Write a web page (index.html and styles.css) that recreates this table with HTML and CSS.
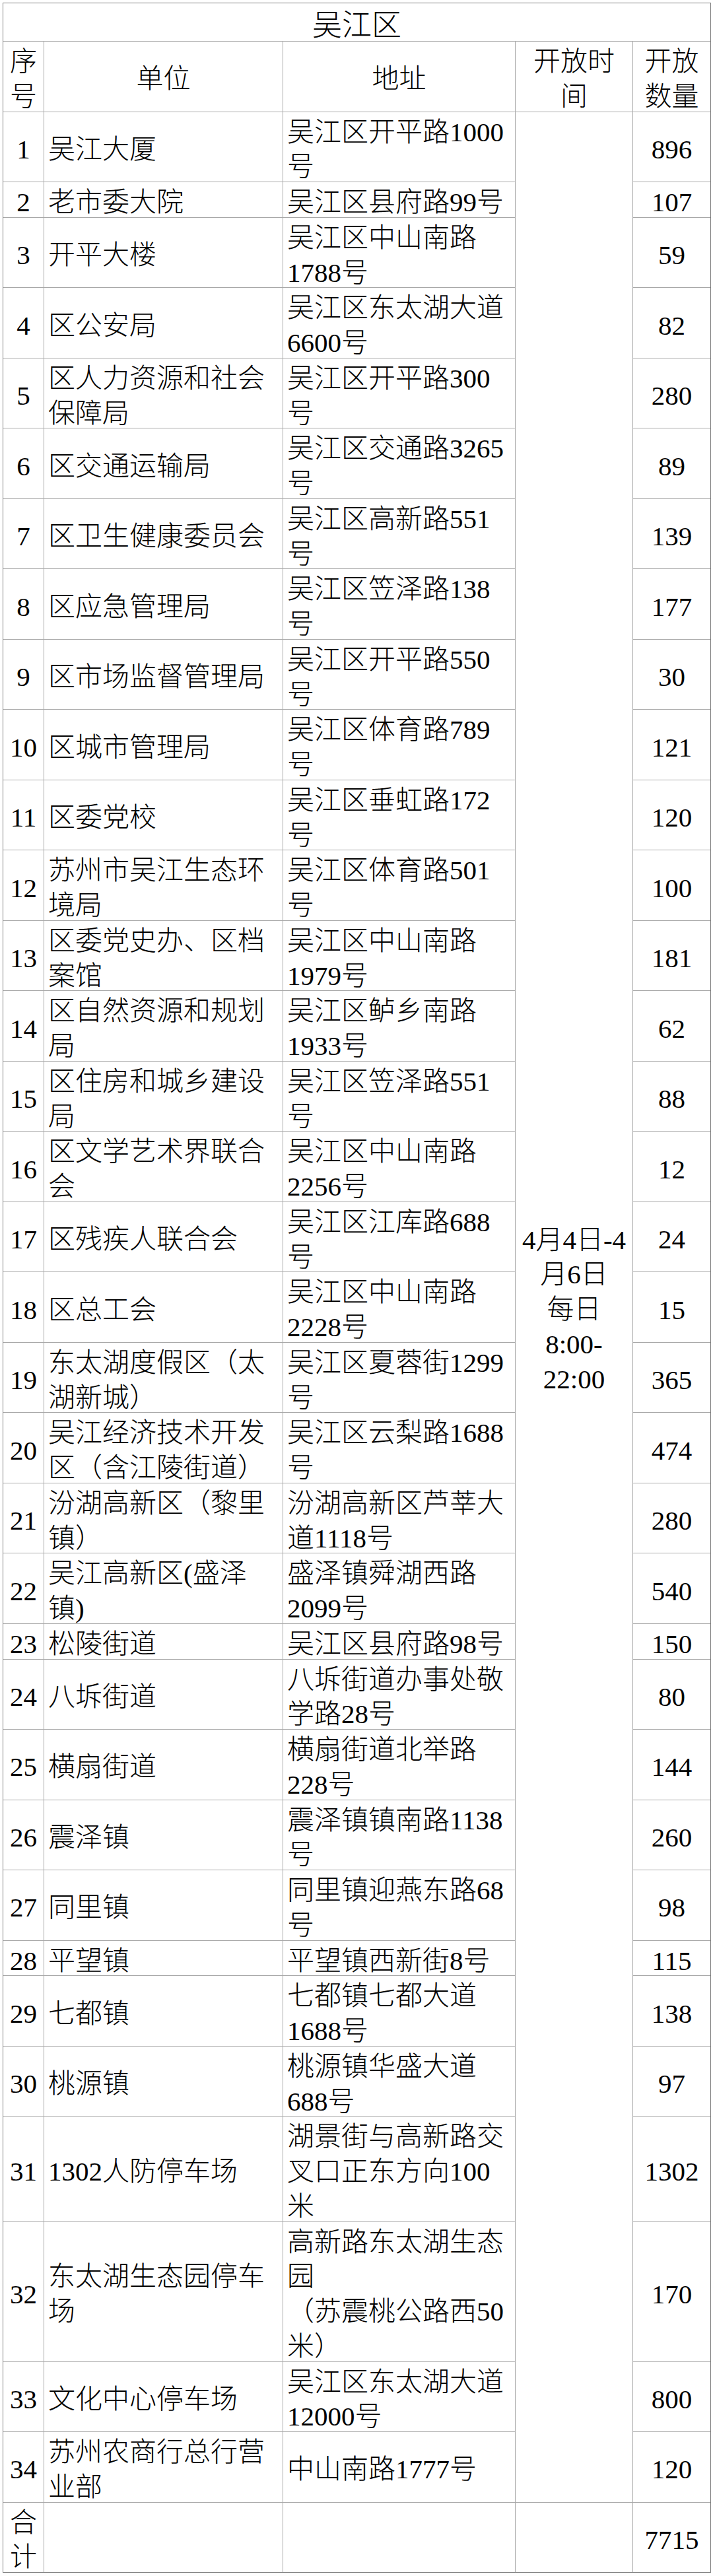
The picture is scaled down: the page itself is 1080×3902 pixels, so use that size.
FILE: index.html
```html
<!DOCTYPE html>
<html lang="zh-CN">
<head>
<meta charset="utf-8">
<title>吴江区</title>
<link rel="stylesheet" href="styles.css">
</head>
<body>
<table class="sheet">
<colgroup>
<col class="w-no"><col class="w-name"><col class="w-addr"><col class="w-time"><col class="w-qty">
</colgroup>
<thead>
<tr class="title"><td colspan="5" class="ctr">吴江区</td></tr>
<tr class="head">
<td class="ctr">序<br>号</td>
<td class="ctr">单位</td>
<td class="ctr">地址</td>
<td class="ctr">开放时<br>间</td>
<td class="ctr">开放<br>数量</td>
</tr>
</thead>
<tbody>
<tr><td class="ctr">1</td><td>吴江大厦</td><td>吴江区开平路1000<br>号</td><td class="ctr time" rowspan="34">4月4日-4<br>月6日<br>每日<br>8:00-<br>22:00</td><td class="ctr">896</td></tr>
<tr><td class="ctr">2</td><td>老市委大院</td><td>吴江区县府路99号</td><td class="ctr">107</td></tr>
<tr><td class="ctr">3</td><td>开平大楼</td><td>吴江区中山南路<br>1788号</td><td class="ctr">59</td></tr>
<tr><td class="ctr">4</td><td>区公安局</td><td>吴江区东太湖大道<br>6600号</td><td class="ctr">82</td></tr>
<tr><td class="ctr">5</td><td>区人力资源和社会<br>保障局</td><td>吴江区开平路300<br>号</td><td class="ctr">280</td></tr>
<tr><td class="ctr">6</td><td>区交通运输局</td><td>吴江区交通路3265<br>号</td><td class="ctr">89</td></tr>
<tr><td class="ctr">7</td><td>区卫生健康委员会</td><td>吴江区高新路551<br>号</td><td class="ctr">139</td></tr>
<tr><td class="ctr">8</td><td>区应急管理局</td><td>吴江区笠泽路138<br>号</td><td class="ctr">177</td></tr>
<tr><td class="ctr">9</td><td>区市场监督管理局</td><td>吴江区开平路550<br>号</td><td class="ctr">30</td></tr>
<tr><td class="ctr">10</td><td>区城市管理局</td><td>吴江区体育路789<br>号</td><td class="ctr">121</td></tr>
<tr><td class="ctr">11</td><td>区委党校</td><td>吴江区垂虹路172<br>号</td><td class="ctr">120</td></tr>
<tr><td class="ctr">12</td><td>苏州市吴江生态环<br>境局</td><td>吴江区体育路501<br>号</td><td class="ctr">100</td></tr>
<tr><td class="ctr">13</td><td>区委党史办、区档<br>案馆</td><td>吴江区中山南路<br>1979号</td><td class="ctr">181</td></tr>
<tr><td class="ctr">14</td><td>区自然资源和规划<br>局</td><td>吴江区鲈乡南路<br>1933号</td><td class="ctr">62</td></tr>
<tr><td class="ctr">15</td><td>区住房和城乡建设<br>局</td><td>吴江区笠泽路551<br>号</td><td class="ctr">88</td></tr>
<tr><td class="ctr">16</td><td>区文学艺术界联合<br>会</td><td>吴江区中山南路<br>2256号</td><td class="ctr">12</td></tr>
<tr><td class="ctr">17</td><td>区残疾人联合会</td><td>吴江区江库路688<br>号</td><td class="ctr">24</td></tr>
<tr><td class="ctr">18</td><td>区总工会</td><td>吴江区中山南路<br>2228号</td><td class="ctr">15</td></tr>
<tr><td class="ctr">19</td><td>东太湖度假区（太<br>湖新城）</td><td>吴江区夏蓉街1299<br>号</td><td class="ctr">365</td></tr>
<tr><td class="ctr">20</td><td>吴江经济技术开发<br>区（含江陵街道）</td><td>吴江区云梨路1688<br>号</td><td class="ctr">474</td></tr>
<tr><td class="ctr">21</td><td>汾湖高新区（黎里<br>镇）</td><td>汾湖高新区芦莘大<br>道1118号</td><td class="ctr">280</td></tr>
<tr><td class="ctr">22</td><td>吴江高新区(盛泽<br>镇)</td><td>盛泽镇舜湖西路<br>2099号</td><td class="ctr">540</td></tr>
<tr><td class="ctr">23</td><td>松陵街道</td><td>吴江区县府路98号</td><td class="ctr">150</td></tr>
<tr><td class="ctr">24</td><td>八坼街道</td><td>八坼街道办事处敬<br>学路28号</td><td class="ctr">80</td></tr>
<tr><td class="ctr">25</td><td>横扇街道</td><td>横扇街道北举路<br>228号</td><td class="ctr">144</td></tr>
<tr><td class="ctr">26</td><td>震泽镇</td><td>震泽镇镇南路1138<br>号</td><td class="ctr">260</td></tr>
<tr><td class="ctr">27</td><td>同里镇</td><td>同里镇迎燕东路68<br>号</td><td class="ctr">98</td></tr>
<tr><td class="ctr">28</td><td>平望镇</td><td>平望镇西新街8号</td><td class="ctr">115</td></tr>
<tr><td class="ctr">29</td><td>七都镇</td><td>七都镇七都大道<br>1688号</td><td class="ctr">138</td></tr>
<tr><td class="ctr">30</td><td>桃源镇</td><td>桃源镇华盛大道<br>688号</td><td class="ctr">97</td></tr>
<tr><td class="ctr">31</td><td>1302人防停车场</td><td>湖景街与高新路交<br>叉口正东方向100<br>米</td><td class="ctr">1302</td></tr>
<tr><td class="ctr">32</td><td>东太湖生态园停车<br>场</td><td>高新路东太湖生态<br>园<br>（苏震桃公路西50<br>米）</td><td class="ctr">170</td></tr>
<tr><td class="ctr">33</td><td>文化中心停车场</td><td>吴江区东太湖大道<br>12000号</td><td class="ctr">800</td></tr>
<tr><td class="ctr">34</td><td>苏州农商行总行营<br>业部</td><td>中山南路1777号</td><td class="ctr">120</td></tr>
<tr><td class="ctr">合<br>计</td><td></td><td></td><td></td><td class="ctr">7715</td></tr>
</tbody>
</table>
</body>
</html>
```
FILE: styles.css
```css
html, body {
  background: #ffffff;
}

body {
  margin: 4px 0 0 4px;
  color: #000000;
  font-family: "Liberation Serif", "Noto Sans CJK SC", serif;
  font-weight: 300;
}

.sheet {
  border-collapse: collapse;
  table-layout: fixed;
  width: 1072px;
  font-size: 41px;
  line-height: 52.75px;
  outline: 1px solid #7a7a7a;
  outline-offset: -1px;
}

.w-no { width: 62px; }
.w-name { width: 362px; }
.w-addr { width: 352px; }
.w-time { width: 178px; }
.w-qty { width: 118px; }

.sheet td {
  border: 1px solid #a8a8a8;
  padding: 4px 6px 0 6px;
  vertical-align: middle;
  text-align: left;
  white-space: nowrap;
}

/* keeps the row height at the line boxes while the text sits a little lower */
.sheet td::after {
  content: "";
  display: block;
  margin-top: -4px;
}

.sheet td.ctr {
  text-align: center;
}

.sheet .time {
  padding-left: 0;
  padding-right: 0;
}

.title td {
  font-size: 45px;
  line-height: 57px;
  padding-top: 6px;
}

.title td::after {
  margin-top: -6px;
}
```
